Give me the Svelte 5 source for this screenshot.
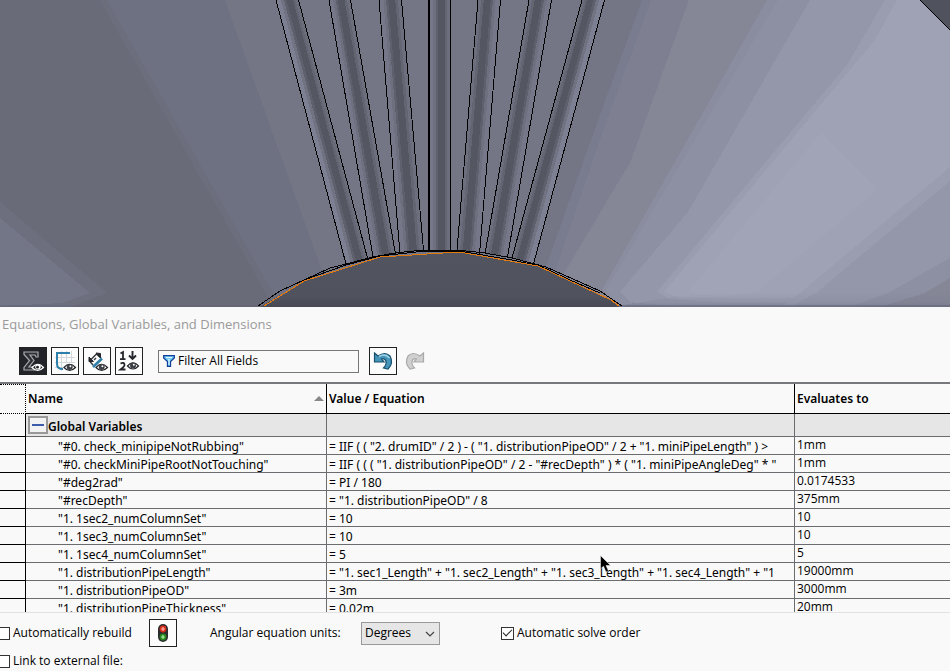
<script>
  const rows = [
    ['"#0. check_minipipeNotRubbing"', '= IIF ( ( "2. drumID" / 2 ) - ( "1. distributionPipeOD" / 2 + "1. miniPipeLength" ) >', '1mm'],
    ['"#0. checkMiniPipeRootNotTouching"', '= IIF ( ( ( "1. distributionPipeOD" / 2 - "#recDepth" ) * ( "1. miniPipeAngleDeg" * "', '1mm'],
    ['"#deg2rad"', '= PI / 180', '0.0174533'],
    ['"#recDepth"', '= "1. distributionPipeOD" / 8', '375mm'],
    ['"1. 1sec2_numColumnSet"', '= 10', '10'],
    ['"1. 1sec3_numColumnSet"', '= 10', '10'],
    ['"1. 1sec4_numColumnSet"', '= 5', '5'],
    ['"1. distributionPipeLength"', '= "1. sec1_Length" + "1. sec2_Length" + "1. sec3_Length" + "1. sec4_Length" + "1', '19000mm'],
    ['"1. distributionPipeOD"', '= 3m', '3000mm'],
    ['"1. distributionPipeThickness"', '= 0.02m', '20mm']
  ];

  // Each pipe: top-left x, top-right x, bottom-left [x, y], bottom-right [x, y]
  const pipes = [
    { a: 276, b: 298, c: [346, 264], d: [367, 258], flip: false },
    { a: 329, b: 350, c: [373, 257], d: [395, 254], flip: false },
    { a: 379, b: 401, c: [400, 254], d: [423, 250], flip: false },
    { a: 429, b: 450, c: [429, 251], d: [450, 251], flip: false },
    { a: 478, b: 500, c: [457, 250], d: [479, 254], flip: true },
    { a: 529, b: 551, c: [485, 254], d: [507, 257], flip: true },
    { a: 582, b: 604, c: [512, 258], d: [533, 264], flip: true }
  ];
  const shades = [
    [0, 0.2, '#767889'],
    [0.2, 0.32, '#6e7080'],
    [0.32, 0.42, '#5e606d'],
    [0.42, 0.74, '#545662'],
    [0.74, 0.86, '#636572'],
    [0.86, 1, '#6d6f7e']
  ];
  const edgeShades = [
    [0, 0.22, '#7d7f93'],
    [0.22, 0.36, '#717383'],
    [0.36, 0.48, '#5e606d'],
    [0.48, 0.78, '#545662'],
    [0.78, 0.88, '#636572'],
    [0.88, 1, '#6b6d7b']
  ];

  const mix = (m, n, t) => m + (n - m) * t;
  function band(p, s, e) {
    const from = p.flip ? 1 - e : s;
    const to = p.flip ? 1 - s : e;
    const at = (t) => [mix(p.a, p.b, t), mix(p.c[0], p.d[0], t), mix(p.c[1], p.d[1], t)];
    const [x1, x2, y2] = at(from);
    const [x3, x4, y4] = at(to);
    return `${x1},0 ${x3},0 ${x4},${y4} ${x2},${y2}`;
  }

  let rebuild = $state(false);
  let solve = $state(true);
  let external = $state(false);
  let filter = $state('');
</script>

{#snippet eye()}
  <path d="M12 19.500Q17.500 13 23.500 19.500Q17.500 25.500 12 19.500Z" fill="#fff" stroke="#24262b" stroke-width="1.200" />
  <circle cx="17.700" cy="19" r="3" fill="#3c3f45" />
  <circle cx="18.400" cy="18.200" r="1" fill="#fff" />
{/snippet}

<main>
  <svg class="scene" viewBox="0 0 950 307" preserveAspectRatio="xMidYMin slice" role="img" aria-label="Model view">
    <defs>
      <linearGradient id="floor" x1="0" x2="0" y1="0" y2="1">
        <stop offset="0" stop-color="#737688" stop-opacity="0" />
        <stop offset="0.7" stop-color="#737688" stop-opacity="0.2" />
        <stop offset="1" stop-color="#737688" stop-opacity="0.6" />
      </linearGradient>
      <linearGradient id="hub" x1="0" x2="0" y1="0" y2="1">
        <stop offset="0" stop-color="#52545f" />
        <stop offset="0.8" stop-color="#50525d" />
        <stop offset="1" stop-color="#474954" />
      </linearGradient>
    </defs>
    <g shape-rendering="crispEdges">
      <rect width="950" height="307" fill="#747686" />
      <path d="M0 0H225L335 307H0Z" fill="#6e7181" />
      <path d="M0 0H107L281 307H0Z" fill="#6c6e7d" />
      <path d="M0 0H100L274 307H0Z" fill="#696b79" />
      <path d="M0 202L107 293L70 307H0Z" fill="#6d6f7f" />
      <path d="M0 218L90 293L62 303L0 306Z" fill="#737686" />
      <path d="M642 0L600 115L543 275L600 307H950V0Z" fill="#797b8e" />
      <path d="M651 0L600 140L554 275L600 307H950V0Z" fill="#7e8091" />
      <path d="M689 0L630 163L600 213L563 275L600 307H950V0Z" fill="#858797" />
      <path d="M767 0L602 290L620 307H950V0Z" fill="#8a8c9f" />
      <path d="M778 0L606 290L620 307H950V0Z" fill="#8d8fa2" />
      <path d="M810 0L688 212L620 292L630 302L680 307H950V0Z" fill="#9496a9" />
      <path d="M885 0L847 65L657 292L670 299L720 302H950V0Z" fill="#9a9caf" />
      <path d="M897 0L875 40L664 292L680 298H950V0Z" fill="#9fa1b4" />
      <path d="M821 133L878 189L757 292L720 297L688 292Z" fill="#a1a3b6" />
      <path d="M950 167L800 293L780 307H950Z" fill="#9a9caf" />
      <path d="M950 181L816 293L790 307H950Z" fill="#9496a9" />
      <path d="M950 258L888 293L850 307H950Z" fill="#8d8fa2" />
      <path d="M950 278L925 293L880 307H950Z" fill="#858797" />
      <path d="M610 307L680 296L760 292H950V307Z" fill="url(#floor)" />
      <rect y="305" width="950" height="2" fill="#62657a" opacity="0.55" />
      <path d="M920 0H950V30Z" fill="#50525e" />
      <path d="M920 0L950 30" stroke="#000" />
      {#each pipes as p, i}
        {#each i === 0 || i === 6 ? edgeShades : shades as [s, e, color]}
          <polygon points={band(p, s, e)} fill={color} />
        {/each}
        <path d="M{p.a} 0L{p.c[0]} {p.c[1]}" stroke="#000" stroke-width={i === 3 ? 2 : 1} />
        <path d="M{p.b + 0.5} 0L{p.d[0] + 0.5} {p.d[1]}" stroke="#000" />
      {/each}
      <path d="M260 307L304 281L380 257L459 252L538 266L611 300L620 307Z" fill="url(#hub)" />
      <path d="M258 306L280 291L304 280L330 268L346 264L373 257L395 253L423 250H457L485 253L512 258L546 267L600 291L622 306" fill="none" stroke="#000" />
      <path d="M304 280L346 265L380 256L425 251H459L512 260L540 266L570 280L600 293" fill="none" stroke="#000" />
      <path d="M264 306L304 281L380 257L459 252L538 266L611 300L619 306" fill="none" stroke="#e27a10" />
    </g>
  </svg>

  <section class="dialog">
    <h1>Equations, Global Variables, and Dimensions</h1>
    <div class="toolbar">
      <div class="views">
        <button class="tool active" aria-label="Equation view">
          <svg viewBox="0 0 26 26">
            <path d="M4 4H18V9H16L15 7H10L14 12.500L9 19H15V22H4V19.500L9.500 12.500L4 6.500Z" fill="#303136" stroke="#a9abae" stroke-width="1.200" />
            <path d="M12 19.500Q18 13 23.500 19.500Q17.500 25.500 12 19.500Z" fill="#24262b" stroke="#fff" stroke-width="1.200" />
            <circle cx="18" cy="18.800" r="2.800" fill="#fff" />
            <circle cx="17.500" cy="19.200" r="1.400" fill="#24262b" />
          </svg>
        </button>
        <button class="tool" aria-label="Sketch equation view">
          <svg viewBox="0 0 26 26">
            <path d="M3 9.500H23M3 14.500H23M3 19.500H12M9.500 3V23M14.500 3V14M19.500 3V14" stroke="#d5d8da" fill="none" />
            <path d="M18 5H5V16Q5 21 11 21" fill="none" stroke="#2f7fab" stroke-width="2" />
            {@render eye()}
          </svg>
        </button>
        <button class="tool" aria-label="Dimension view">
          <svg viewBox="0 0 26 26">
            <path d="M9 17L5.500 13L12.500 6L17 10" fill="none" stroke="#33363b" stroke-width="1.400" />
            <path d="M5 9V13.500H9.500ZM12 5L16.500 5.500V10Z" fill="#24262b" stroke="#24262b" />
            <path d="M10 12L12 10" stroke="#33363b" stroke-width="1.500" />
            <path d="M9 19L18 10.500" fill="none" stroke="#2f7fab" stroke-width="2.600" />
            {@render eye()}
          </svg>
        </button>
        <button class="tool" aria-label="Ordered view">
          <svg viewBox="0 0 26 26">
            <path d="M4.500 5.500L7 4V11M4 11.200H9.500" fill="none" stroke="#24262b" stroke-width="1.800" />
            <path d="M4.500 15.500Q8.500 13.500 8.500 17Q8.500 18.500 4.500 21.500H9.500" fill="none" stroke="#24262b" stroke-width="1.800" />
            <path d="M16.500 3V11M13 7.500L16.500 11L20 7.500" fill="none" stroke="#24262b" stroke-width="1.900" />
            <path d="M11.500 18Q17 11.500 22.500 18Q17 24 11.500 18Z" fill="#fff" stroke="#24262b" stroke-width="1.200" />
            <circle cx="17" cy="17.500" r="3" fill="#3c3f45" />
            <circle cx="17.800" cy="16.800" r="1" fill="#fff" />
          </svg>
        </button>
      </div>
      <div class="filter">
        <svg viewBox="0 0 12 12" aria-hidden="true">
          <path d="M.700.700H11.300V3L7.500 6.500V11.300H4.500V6.500L.700 3Z" fill="#76cdf2" stroke="#123f9a" stroke-width="1.300" />
          <path d="M3 2.500H9M6 4V10" stroke="#d9f6ff" stroke-width="1.200" />
        </svg>
        <input type="text" aria-label="Filter" placeholder="Filter All Fields" bind:value={filter} />
      </div>
      <button class="tool" aria-label="Undo">
        <svg viewBox="0 0 26 26">
          <path d="M4.500 5L8 8Q15 3 20 8Q24 15 18 21L13.500 20Q18 15 15 11.500Q13 10 11.500 11L14 14H4.500Z" fill="#4594ba" stroke="#174f6d" stroke-width="1.200" />
          <path d="M9 8.500Q15 5 19.500 10" fill="none" stroke="#a5d5e6" stroke-width="1.500" />
        </svg>
      </button>
      <button class="redo" aria-label="Redo" disabled>
        <svg viewBox="0 0 26 26">
          <path d="M21.500 5L18 8Q11 3 6 8Q2 15 8 21L12.500 20Q8 15 11 11.500Q13 10 14.500 11L12 14H21.500Z" fill="#d0d0d0" stroke="#a9a9a9" stroke-width="1.200" />
        </svg>
      </button>
    </div>

    <div class="grid">
      <table>
        <colgroup><col class="c-mark" /><col class="c-name" /><col class="c-value" /><col /></colgroup>
        <thead>
          <tr>
            <th class="mark" aria-label="Row"></th>
            <th><span class="sorted">Name <i></i></span></th>
            <th>Value / Equation</th>
            <th>Evaluates to</th>
          </tr>
        </thead>
        <tbody>
          <tr class="group">
            <td class="mark"></td>
            <td><span class="title"><button class="collapse" aria-label="Collapse Global Variables"></button><span>Global Variables</span></span></td>
            <td></td>
            <td></td>
          </tr>
          {#each rows as [name, value, result]}
            <tr>
              <td class="mark"></td>
              <td class="name">{name}</td>
              <td class="value">{value}</td>
              <td class="result">{result}</td>
            </tr>
          {/each}
        </tbody>
      </table>
    </div>

    <footer>
      <div class="options">
        <label class="check rebuild"><input type="checkbox" bind:checked={rebuild} />Automatically rebuild</label>
        <button class="tool" aria-label="Rebuild">
          <svg viewBox="0 0 26 26">
            <rect x="8" y="4" width="10" height="18" rx="5" fill="#2b2c2e" />
            <circle cx="13" cy="9" r="3.400" fill="#d42a1c" />
            <circle cx="13" cy="17" r="3.400" fill="#26851f" />
            <path d="M11 9H15M13 7V11" stroke="#ffb5a8" stroke-width="1.200" />
            <path d="M11 17H15M13 15V19" stroke="#a8eba0" stroke-width="1.200" />
          </svg>
        </button>
        <label class="units" for="units">Angular equation units:</label>
        <div class="select">
          <select id="units"><option>Degrees</option><option>Radians</option></select>
          <svg viewBox="0 0 10 6" aria-hidden="true"><path d="M1 1L5 5L9 1" fill="none" stroke="#444" stroke-width="1.200" /></svg>
        </div>
        <label class="check solve"><input type="checkbox" bind:checked={solve} />Automatic solve order</label>
      </div>
      <label class="check"><input type="checkbox" bind:checked={external} />Link to external file:</label>
    </footer>
  </section>

  <svg class="pointer" viewBox="0 0 12 18" aria-hidden="true">
    <path d="M.500.500V14L3.500 11.200L6 17L8.500 16L6 10.500H10.500Z" fill="#000" stroke="#f9f9f9" stroke-width=".5" />
  </svg>
</main>

<style>
  :global(body) { margin: 0; overflow: hidden; background: #f9f9f9; }
  main {
    position: relative;
    display: flex;
    flex-direction: column;
    height: 100vh;
    overflow: hidden;
    color: #000;
    font: 12px/16px "Noto Sans", "Open Sans", sans-serif;
  }
  .scene { display: block; flex: none; width: 100%; height: 307px; }
  .dialog { display: flex; flex: 1; flex-direction: column; min-height: 0; background: #f9f9f9; }
  h1 { margin: 0; padding: 8px 2px; color: #999; font: 13px/18px "Open Sans", "Noto Sans", sans-serif; }
  .toolbar { display: flex; align-items: center; padding: 6px 19px 7px; }
  .views { display: flex; gap: 4px; margin-right: 15px; }
  button { box-sizing: border-box; padding: 0; }
  .tool { flex: none; width: 28px; height: 28px; border: 1px solid #222; background: #fcfcfc; }
  .tool svg, .redo svg { display: block; width: 26px; height: 26px; }
  .active { background: #232429; }
  .redo { width: 26px; height: 26px; margin-left: 5px; border: 0; background: none; }
  .filter {
    display: flex;
    align-items: center;
    gap: 3px;
    box-sizing: border-box;
    width: 201px;
    height: 23px;
    margin-right: 10px;
    padding-left: 4px;
    border: 1px solid #777;
  }
  .filter svg { flex: none; width: 12px; height: 12px; }
  .filter input { flex: 1; min-width: 0; padding: 0; border: 0; outline: 0; background: none; color: #000; font: 12px/16px "Open Sans", sans-serif; }
  .filter input::placeholder { color: #000; opacity: 1; }

  .grid { flex: 1; min-height: 0; overflow: hidden; border-top: 2px solid #77787c; border-bottom: 1px solid #e2e2e2; }
  table { width: 100%; table-layout: fixed; border-collapse: separate; border-spacing: 0; }
  .c-mark { width: 26px; }
  .c-name { width: 301px; }
  .c-value { width: 468px; }
  th, td {
    box-sizing: border-box;
    padding: 0 2px;
    overflow: hidden;
    border-right: 1px solid #6b6c70;
    border-bottom: 1px solid #6b6c70;
    text-align: left;
    white-space: nowrap;
  }
  th { height: 30px; border-color: #000; font-size: 12px; font-weight: 600; }
  th.mark { border-top: 1px dotted #000; border-right: 1px dotted #000; border-bottom: 1px dotted #000; }
  th:last-child, td:last-child { border-right: 0; }
  .sorted { display: flex; align-items: center; justify-content: space-between; }
  .sorted i { border: 5px solid transparent; border-top: 0; border-bottom-color: #888; }
  td { height: 18px; line-height: 16px; }
  td.mark { border-color: #000; }
  .group td { height: 23px; background: #e6e6e6; font-weight: 600; }
  .group td.mark { background: none; }
  .title { display: flex; align-items: center; }
  .title span { padding-top: 4px; }
  .collapse { display: flex; align-items: center; justify-content: center; width: 20px; height: 18px; border: 2px solid #999; background: #f2f2f2; }
  .collapse::before { content: ""; width: 12px; height: 2px; background: #3c5cab; }
  .name, .value { padding-top: 2px; line-height: 15px; }
  .name { padding-left: 32px; }
  .result { padding-bottom: 2px; font: 12px/14px "Open Sans", sans-serif; }

  footer { flex: none; padding-bottom: 2px; font-family: "Open Sans", "Noto Sans", sans-serif; }
  .options { display: flex; align-items: center; height: 40px; }
  .check { display: flex; align-items: center; gap: 3px; margin-left: -3px; white-space: nowrap; }
  .check input { display: grid; place-items: center; box-sizing: border-box; width: 13px; height: 13px; margin: 0; border: 1px solid #333; background: #fff; appearance: none; }
  .check input:checked::before { content: ""; width: 8px; height: 4px; margin-bottom: 3px; border-bottom: 1px solid #222; border-left: 1px solid #222; transform: rotate(-45deg); }
  .rebuild { width: 152px; }
  .units { width: 151px; margin-left: 33px; white-space: nowrap; }
  .select { position: relative; }
  select { box-sizing: border-box; width: 79px; height: 23px; padding: 0 3px; border: 1px solid #999; border-radius: 0; background: #e6e6e6; color: #000; font: 12px/16px "Open Sans", sans-serif; appearance: none; }
  .select svg { position: absolute; top: 9px; right: 5px; width: 10px; height: 6px; pointer-events: none; }
  .check.solve { margin-left: 61px; }
  .pointer { position: absolute; top: 555px; left: 600px; width: 12px; height: 18px; pointer-events: none; }
</style>
